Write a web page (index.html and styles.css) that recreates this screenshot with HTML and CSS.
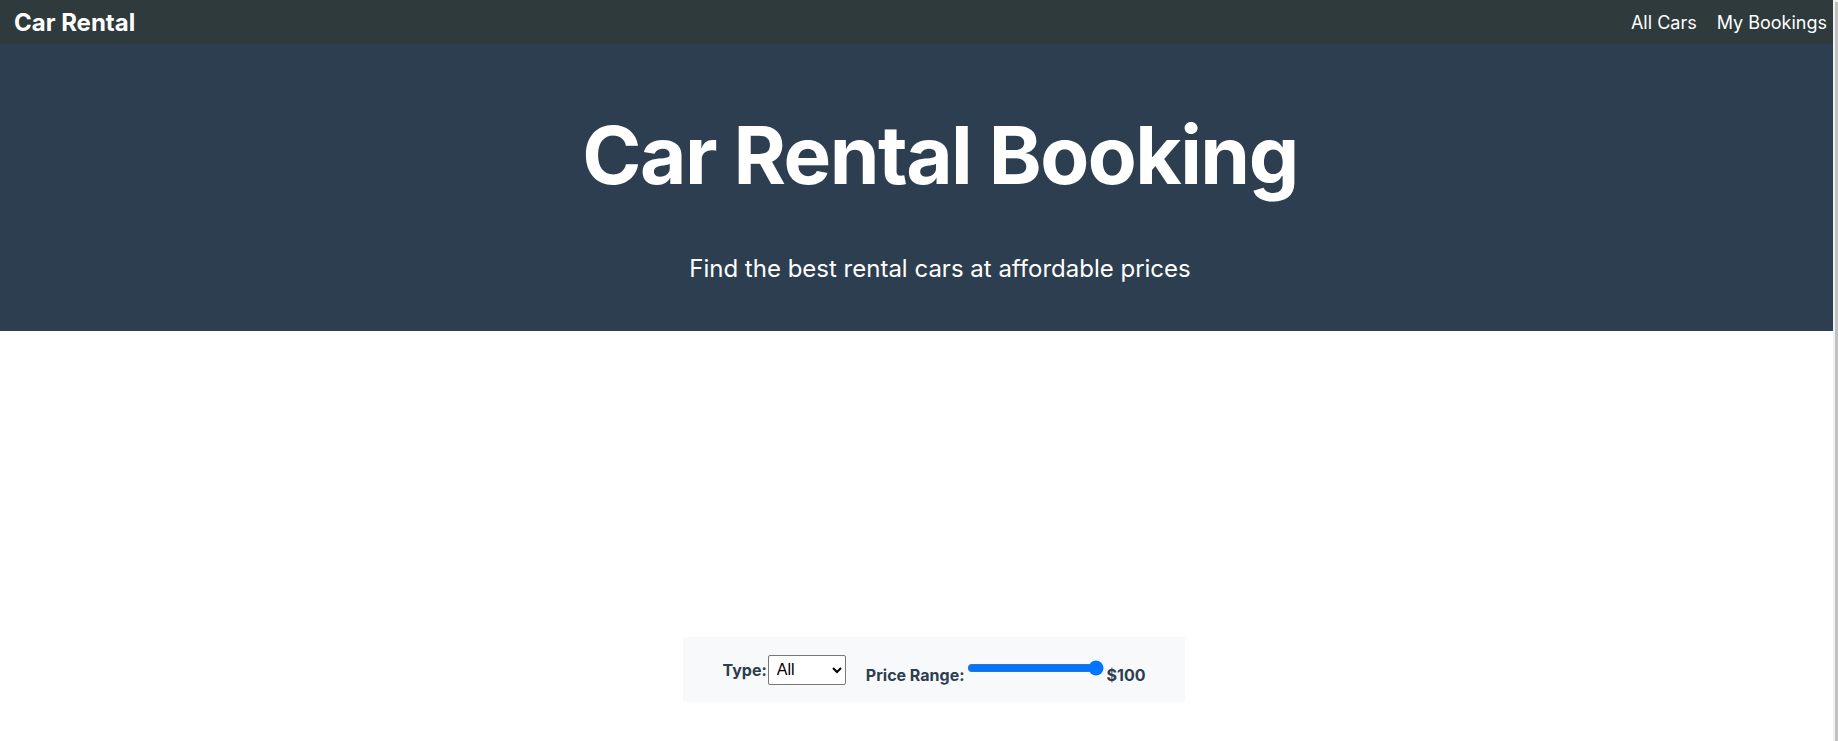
FILE: index.html
```html
<!DOCTYPE html>
<html lang="en">
<head>
<meta charset="utf-8">
<title>Car Rental Booking</title>
<link rel="stylesheet" href="styles.css">
</head>
<body>
<div class="page">
  <div class="app">
    <nav class="navbar">
      <a class="brand" href="#">Car Rental</a>
      <div class="nav-links">
        <a href="#">All Cars</a>
        <a href="#">My Bookings</a>
      </div>
    </nav>
    <header class="hero">
      <h1>Car Rental Booking</h1>
      <p>Find the best rental cars at affordable prices</p>
    </header>
    <main class="content">
      <div class="filters">
        <div class="filter-group type">
          <label for="type">Type:</label>
          <select id="type">
            <option>All</option>
            <option>SUV</option>
            <option>Sedan</option>
          </select>
        </div>
        <div class="filter-group price">
          <label for="price">Price Range:</label>
          <input id="price" type="range" min="0" max="100" value="100">
          <span class="price-value">$100</span>
        </div>
      </div>
    </main>
  </div>
  <div class="scroll-track"><div class="scroll-thumb"></div></div>
</div>
</body>
</html>
```
FILE: styles.css
```css
html, body {
  margin: 0;
  padding: 0;
  height: 100%;
  overflow: hidden;
}
body {
  font-family: Inter, "Noto Sans", sans-serif;
  background: #ffffff;
}
.page {
  display: flex;
  height: 741px;
}
.app {
  flex: 1;
  min-width: 0;
}
.scroll-track {
  width: 5px;
  background: #f1f1f1;
  display: flex;
  padding-left: 2px;
  box-sizing: border-box;
}
.scroll-thumb {
  flex: 1;
  background: #c1c1c1;
  margin-top: 2px;
}
.navbar {
  height: 44px;
  background: #2e3a3b;
  display: flex;
  align-items: center;
  justify-content: space-between;
  padding: 0 6px 0 14px;
}
.navbar a {
  color: #ffffff;
  text-decoration: none;
}
.brand {
  font-size: 24px;
  font-weight: 700;
}
.nav-links {
  display: flex;
  gap: 20px;
  font-size: 18px;
}
.hero {
  background: #2c3e50;
  color: #ffffff;
  height: 287px;
  box-sizing: border-box;
  padding: 61px 0 0 47px;
  text-align: center;
}
.hero h1 {
  margin: 0;
  font-size: 80px;
  font-weight: 700;
  line-height: 100px;
  letter-spacing: -1.5px;
}
.hero p {
  margin: 49px 0 0;
  font-size: 24px;
  line-height: 30px;
}
.content {
  padding-top: 306px;
  padding-left: 35px;
  display: flex;
  justify-content: center;
}
.filters {
  width: 502px;
  height: 65px;
  box-sizing: border-box;
  background: #f8f9fa;
  display: flex;
  align-items: center;
  justify-content: center;
  gap: 20px;
  color: #2c3e50;
  font-weight: 700;
  font-size: 16px;
}
.filter-group {
  display: flex;
}
.filter-group.type {
  align-items: center;
  gap: 1px;
}
.filter-group.price {
  align-items: flex-start;
}
.filter-group.price label,
.filter-group.price .price-value {
  margin-top: 11px;
}
.filter-group.price .price-value {
  margin-left: 1px;
}
.filter-group select {
  width: 78px;
  height: 30px;
  padding-left: 4px;
  font-family: "Liberation Sans", Arial, sans-serif;
  font-size: 16px;
  border: 1px solid #767676;
  border-radius: 2px;
  background: #ffffff;
  color: #000000;
}
.filter-group input[type="range"] {
  width: 137px;
  margin: 6px 2px 2px;
}
```
